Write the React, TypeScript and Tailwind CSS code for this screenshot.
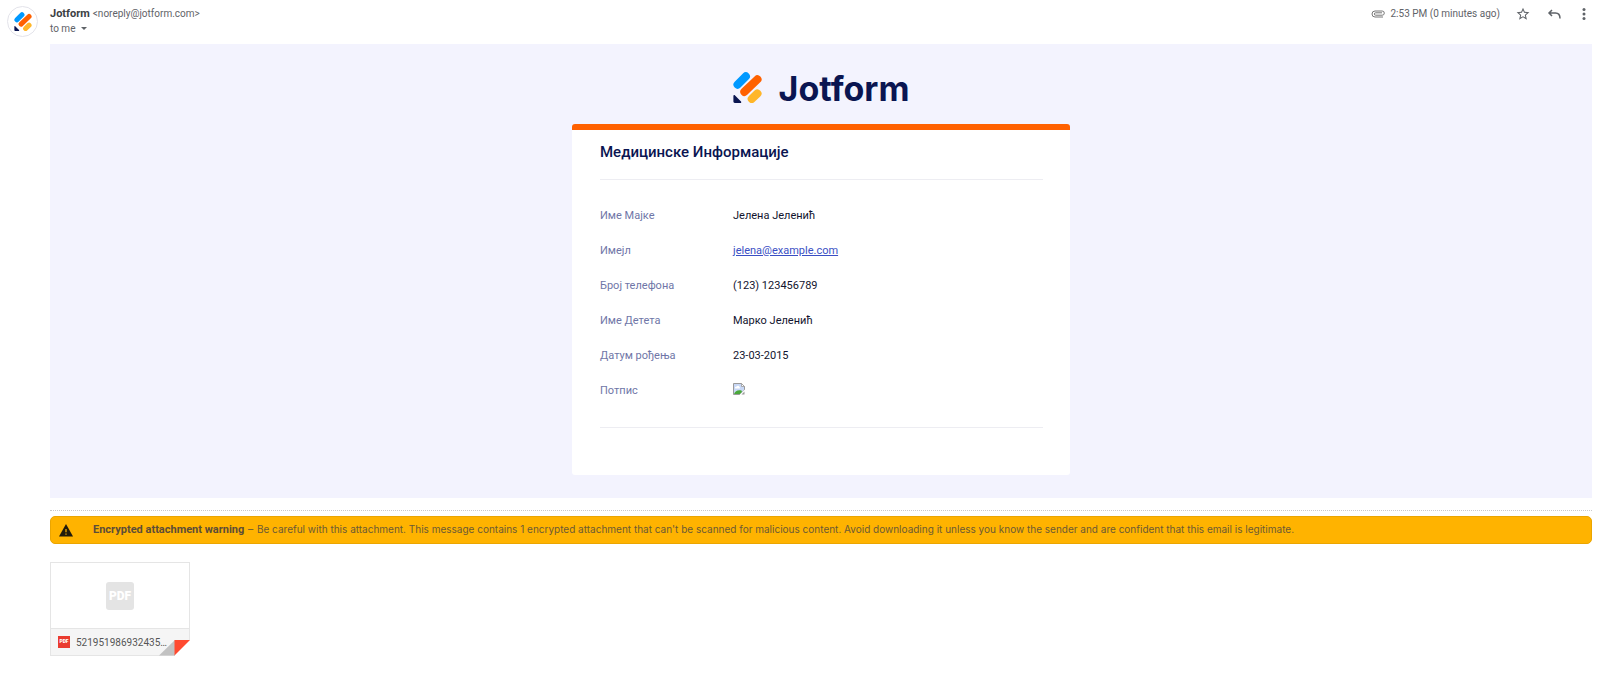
import React from 'react';

interface Field {
  label: string;
  value: React.ReactNode;
}

const LogoMark: React.FC<{ className: string }> = ({ className }) => (
  <svg viewBox="0 0 29 31" className={className} aria-hidden="true">
    <g strokeLinecap="round" strokeWidth="8.2">
      <path d="M4.6 12.6 L12.8 4.4" stroke="#0099ff" />
      <path d="M11.4 19.8 L24.4 7.4" stroke="#ff6100" />
      <path d="M18.8 26.900 L24.4 21.5" stroke="#ffb629" />
    </g>
    <path d="M0.4 23.8c0-.9.9-1.2 1.4-.6l6.2 6.2c.6.6.2 1.6-.6 1.6H1.8C1 31 .4 30.400.4 29.600z" fill="#0a1551" />
  </svg>
);

const BrokenImage = () => (
  <svg viewBox="0 0 12 12" className="inline size-3 align-baseline" role="img" aria-label="Потпис">
    <path d="M.5.5H8.500L11.500 3.500V7L7 11.500H.5z" fill="#c8d8f6" stroke="#9a9a9a" />
    <path d="M2.200 5.500a1.300 1.300 0 0 1 1.500-2 1.500 1.500 0 0 1 2.800.8c.9 0 .9 1.200 0 1.200z" fill="#fff" />
    <path d="M1 11C2 8 5 6.500 8.500 7.500L9 9 7 11z" fill="#4aa83a" />
    <path d="M8.500.5v3h3z" fill="#fff" stroke="#9a9a9a" strokeWidth=".8" />
    <path d="M12 6.500V8L8 12H6.500z" fill="#fff" />
    <path d="M11.500 8.500v3h-3z" fill="#9a9a9a" />
  </svg>
);

const fields: Field[] = [
  { label: 'Име Мајке', value: 'Јелена Јеленић' },
  {
    label: 'Имејл',
    value: (
      <a href="mailto:jelena@example.com" className="text-[#3a4fc4] underline">
        jelena@example.com
      </a>
    ),
  },
  { label: 'Број телефона', value: '(123) 123456789' },
  { label: 'Име Детета', value: 'Марко Јеленић' },
  { label: 'Датум рођења', value: '23-03-2015' },
  { label: 'Потпис', value: <BrokenImage /> },
];

const MessageHeader = () => (
  <header className="flex items-start pt-1.5 pr-[9px] pb-[7px] pl-[7px]">
    <div className="flex size-[31px] shrink-0 items-center justify-center rounded-full border border-[#e3e3ea]">
      <LogoMark className="h-[19px] w-[18px] fill-none" />
    </div>
    <div className="ml-3 leading-[15px] text-[#5f6368]">
      <div className="flex items-baseline gap-[3px]">
        <h1 className="text-[11px] font-bold text-[#3c4043]">Jotform</h1>
        <span className="text-[10px]">&lt;noreply@jotform.com&gt;</span>
      </div>
      <button className="flex items-center gap-1.5 text-[10px]">
        to me
        <span className="border-x-[3px] border-t-[3px] border-x-transparent border-t-[#5f6368]" />
      </button>
    </div>
    <div className="ml-auto flex h-[15px] items-center text-[#5f6368]">
      <svg viewBox="0 0 14 8" className="mr-1.5 h-2 w-3.5 fill-none stroke-[#777]" aria-hidden="true">
        <path d="M12 7H4a3 3 0 0 1 0-6h7.200a2 2 0 0 1 0 4.200H4.600a1.200 1.200 0 0 1 0-2.400H11" />
      </svg>
      <time className="text-[10px]">2:53 PM (0 minutes ago)</time>
      <button aria-label="Star" className="ml-4">
        <svg viewBox="1 1 22 22" className="size-3.5 fill-current">
          <path d="M22 9.240l-7.190-.620L12 2 9.190 8.630 2 9.240l5.460 4.730L5.820 21 12 17.270 18.180 21l-1.630-7.030L22 9.240zM12 15.400l-3.760 2.270 1-4.280-3.320-2.880 4.380-.380L12 6.100l1.710 4.040 4.380.380-3.320 2.880 1 4.280L12 15.400z" />
        </svg>
      </button>
      <button aria-label="Reply" className="ml-[17px]">
        <svg viewBox="0 0 14 14" className="size-3.5 fill-none stroke-current stroke-[1.500]">
          <path d="M5 3 2 6l3 3M2 6h6.500c2.500 0 4.500 2 4.500 5.500" />
        </svg>
      </button>
      <button aria-label="More" className="ml-4">
        <svg viewBox="0 0 14 14" className="size-3.5 fill-current">
          <circle cx="7" cy="2.500" r="1.500" />
          <circle cx="7" cy="7" r="1.500" />
          <circle cx="7" cy="11.500" r="1.500" />
        </svg>
      </button>
    </div>
  </header>
);

const SubmissionCard = () => (
  <section className="w-full max-w-[498px] rounded-[3px] border-t-[6px] border-[#ff6100] bg-white pt-3 pr-[27px] pb-[47px] pl-7">
    <h2 className="text-[15px] leading-5 font-medium text-[#0a1551]">Медицинске Информације</h2>
    <hr className="mt-[17px] border-[#ededf2]" />
    <table className="mt-[19px] w-full text-left text-[11px]">
      <tbody>
        {fields.map((field) => (
          <tr key={field.label} className="h-[35px]">
            <th scope="row" className="w-[133px] p-0 font-normal text-[#6f76a7]">
              {field.label}
            </th>
            <td className="p-0 text-[#12142e]">{field.value}</td>
          </tr>
        ))}
      </tbody>
    </table>
    <hr className="mt-[18px] border-[#ededf2]" />
  </section>
);

const AttachmentWarning = () => (
  <div
    role="alert"
    className="mt-[5px] flex min-h-7 items-center rounded-[5px] border border-[#eba500] bg-[#ffb300] pl-2 text-[11px] text-[#6b5a36]"
  >
    <svg viewBox="0 0 14 13" className="mr-5 h-[13px] w-3.5 shrink-0" aria-hidden="true">
      <path d="M7 0l7 12.500H0z" fill="#211b0c" />
      <path d="M6.400 5h1.200v3.200H6.400zM6.400 9.500h1.200v1.300H6.400z" fill="#ffb300" />
    </svg>
    <p>
      <strong className="font-bold text-[#5c4d38]">Encrypted attachment warning</strong> –{' '}
      <span className="font-[Inter] text-[10px]">
        Be careful with this attachment. This message contains 1 encrypted attachment that can't be scanned for
        malicious content. Avoid downloading it unless you know the sender and are confident that this email is
        legitimate.
      </span>
    </p>
  </div>
);

const Attachment = () => (
  <a href="#attachment" className="relative mt-[18px] block w-[140px] border border-[#e5e5e5] bg-white">
    <div className="flex h-[65px] items-center justify-center">
      <span className="flex size-7 items-center justify-center rounded-[3px] bg-[#e4e4e4] text-xs font-black text-white">
        PDF
      </span>
    </div>
    <div className="flex h-[27px] items-center gap-1.5 border-t border-[#e5e5e5] bg-[#f5f5f5] pl-[7px]">
      <span className="flex size-3 items-center justify-center bg-[#ea3b2e] text-[5px] font-black text-white">
        PDF
      </span>
      <span className="text-[10px] text-[#555]">521951986932435…</span>
    </div>
    <svg viewBox="0 0 31 16" className="absolute -right-px -bottom-px h-4 w-[31px]" aria-hidden="true">
      <path d="M16 0h15v16H16z" fill="#fff" />
      <path d="M0 15.500L16 0v15.500z" fill="#c2c2c2" />
      <path d="M15.500 0H31L15.500 15.500z" fill="#ff4a30" />
    </svg>
  </a>
);

const App: React.FC = () => {
  return (
    <div className="min-h-screen bg-white font-[Roboto,sans-serif]">
      <MessageHeader />
      <main className="mr-2 ml-[50px]">
        <div className="flex flex-col items-center bg-[#f3f3fe] pt-7 pb-[23px]">
          <div className="mb-[21px] flex h-[31px] items-start gap-[17px]">
            <LogoMark className="h-[31px] w-[29px] fill-none" />
            <span className="font-[Inter] text-[34px] leading-[33px] font-bold text-[#0a1551]">Jotform</span>
          </div>
          <SubmissionCard />
        </div>
        <hr className="mt-3 border-dotted border-[#c9c9c9]" />
        <AttachmentWarning />
        <Attachment />
      </main>
    </div>
  );
};

export default App;
